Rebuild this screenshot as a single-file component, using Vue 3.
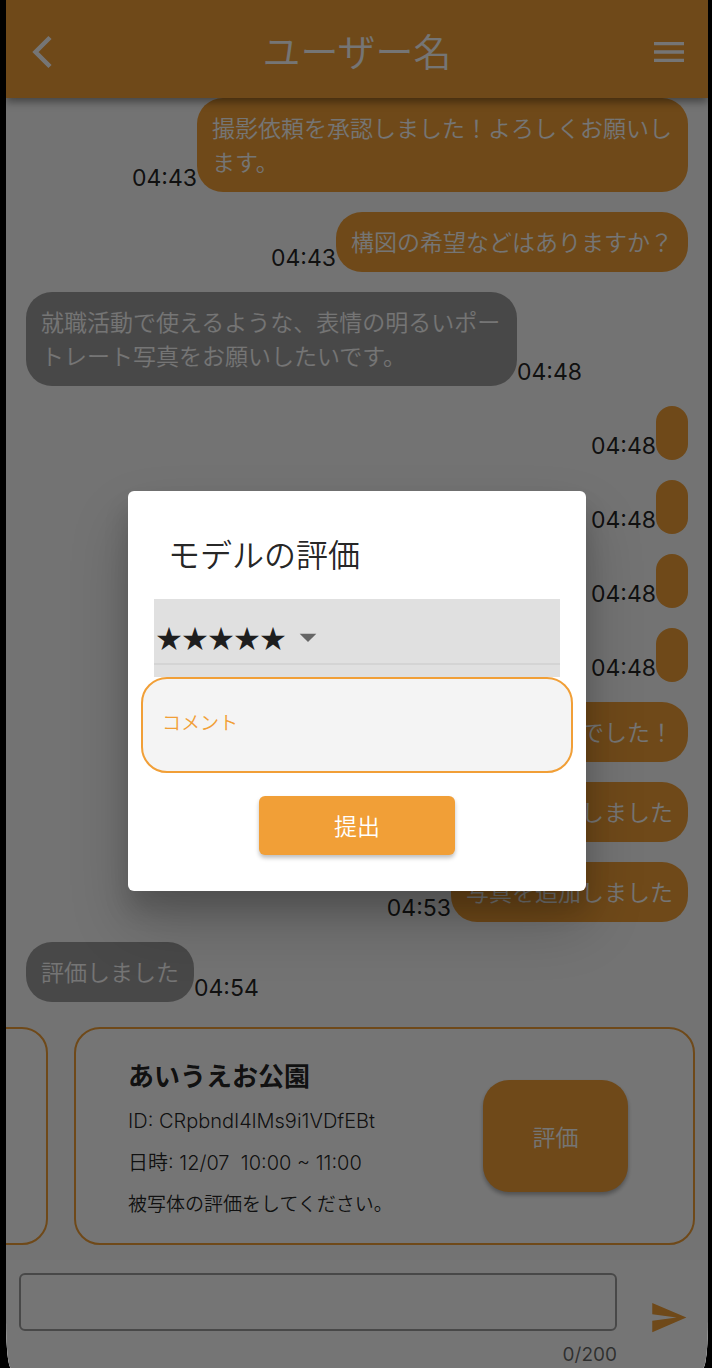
<template>
  <div class="app">
    <header class="header">
      <button class="icon-btn" aria-label="戻る">
        <svg width="40" height="40" viewBox="0 0 40 40">
          <path d="M25 5.5 L10.5 20 L25 34.5" fill="none" stroke="currentColor" stroke-width="4.5" />
        </svg>
      </button>
      <h1>ユーザー名</h1>
      <button class="icon-btn" aria-label="メニュー">
        <svg width="40" height="40" viewBox="0 0 24 24">
          <path d="M3 18h18v-2H3v2zm0-5h18v-2H3v2zm0-7v2h18V6H3z" fill="currentColor" />
        </svg>
      </button>
    </header>

    <main class="messages">
      <div
        v-for="msg in messages"
        :key="msg.id"
        class="message"
        :class="{ mine: msg.mine }"
      >
        <p class="bubble">{{ msg.text }}</p>
        <time>{{ msg.time }}</time>
      </div>
    </main>

    <section class="cards">
      <div class="card" />
      <article class="card">
        <div class="card-info">
          <h2>あいうえお公園</h2>
          <p>ID: CRpbndI4lMs9i1VDfEBt</p>
          <p>日時: 12/07&nbsp; 10:00 ~ 11:00</p>
          <p class="note">被写体の評価をしてください。</p>
        </div>
        <button class="review-btn" @click="open = true">評価</button>
      </article>
    </section>

    <form class="composer" @submit.prevent>
      <div class="field">
        <input v-model="draft" type="text" maxlength="200" aria-label="メッセージ">
        <span class="counter">{{ draft.length }}/200</span>
      </div>
      <button class="send" aria-label="送信">
        <svg width="39" height="39" viewBox="0 0 24 24">
          <path d="M2.01 21L23 12 2.01 3 2 10l15 2-15 2z" fill="currentColor" />
        </svg>
      </button>
    </form>

    <div v-if="open" class="overlay">
      <form class="dialog" role="dialog" aria-labelledby="dialog-title" @submit.prevent="open = false">
        <h2 id="dialog-title">モデルの評価</h2>
        <div class="rating">
          <div class="rating-row">
            <select v-model="rating" aria-label="評価">
              <option v-for="n in 5" :key="n" :value="n">{{ '★'.repeat(n) }}</option>
            </select>
            <svg width="40" height="40" viewBox="0 0 24 24">
              <path d="M7 10l5 5 5-5z" fill="currentColor" />
            </svg>
          </div>
        </div>
        <input v-model="comment" class="comment" type="text" placeholder="コメント" aria-label="コメント">
        <button class="submit">提出</button>
      </form>
    </div>
  </div>
</template>

<script setup>
import { ref } from 'vue';

const open = ref(true);
const rating = ref(5);
const comment = ref('');
const draft = ref('');

const messages = ref([
  { id: 1, mine: true, time: '04:43', text: '撮影依頼を承認しました！よろしくお願いします。' },
  { id: 2, mine: true, time: '04:43', text: '構図の希望などはありますか？' },
  { id: 3, mine: false, time: '04:48', text: '就職活動で使えるような、表情の明るいポートレート写真をお願いしたいです。' },
  { id: 4, mine: true, time: '04:48', text: '' },
  { id: 5, mine: true, time: '04:48', text: '' },
  { id: 6, mine: true, time: '04:48', text: '' },
  { id: 7, mine: true, time: '04:48', text: '' },
  { id: 8, mine: true, time: '04:53', text: 'お疲れ様でした！' },
  { id: 9, mine: true, time: '04:53', text: '写真を追加しました' },
  { id: 10, mine: true, time: '04:53', text: '写真を追加しました' },
  { id: 11, mine: false, time: '04:54', text: '評価しました' },
]);
</script>

<style>
body {
  margin: 0;
  background: #000;
}
</style>

<style scoped>
* {
  box-sizing: border-box;
}

.app {
  position: relative;
  display: flex;
  flex-direction: column;
  min-height: 100vh;
  margin: 0 4px 0 6px;
  overflow: hidden;
  background: #fafafa;
  border-radius: 0 0 5px 5px / 0 0 48px 48px;
  color: rgba(0, 0, 0, 0.87);
  font-family: Inter, "Noto Sans CJK JP", sans-serif;
  font-size: 23px;
}

h1, h2, p {
  margin: 0;
}

button, input, select {
  font-family: inherit;
}

button {
  padding: 0;
  border: none;
  cursor: pointer;
}

/* Header */
.header {
  position: relative;
  display: flex;
  align-items: center;
  justify-content: space-between;
  height: 98px;
  padding: 6px 19px 0;
  background: #f19f37;
  color: #fff;
  box-shadow: 0 4px 8px rgba(0, 0, 0, 0.4);
}

.header h1 {
  font-size: 38px;
  font-weight: 350;
  line-height: 56px;
}

.icon-btn {
  display: flex;
  background: none;
  color: inherit;
}

/* Messages */
.messages {
  display: flex;
  flex: 1;
  flex-direction: column;
  gap: 20px;
  padding: 0 20px;
}

.message {
  display: flex;
  align-items: flex-end;
}

.message.mine {
  flex-direction: row-reverse;
}

.bubble {
  min-width: 32px;
  max-width: 491px;
  min-height: 54px;
  padding: 14px 15px 12px;
  border-radius: 26px;
  background: #9e9e9e;
  color: #fff;
  font-weight: 350;
  line-height: 34px;
}

.mine .bubble {
  background: #f19f37;
}

time {
  line-height: 27px;
}

/* Reservation cards */
.cards {
  display: flex;
  justify-content: flex-end;
  gap: 26px;
  padding: 25px 13px 15px;
}

.card {
  display: flex;
  flex: 0 0 calc(100% - 55px);
  align-items: center;
  justify-content: space-between;
  height: 218px;
  padding: 0 65px 0 52px;
  border: 2px solid #f19f37;
  border-radius: 26px;
  background: #fff;
}

.card-info {
  padding-top: 12px;
  font-size: 20px;
  font-weight: 350;
  line-height: 42px;
}

.card-info h2 {
  margin-bottom: 5px;
  font-size: 26px;
  font-weight: 700;
  line-height: 36px;
}

.card-info .note {
  font-size: 19px;
}

.review-btn {
  width: 145px;
  height: 112px;
  border-radius: 26px;
  background: #f19f37;
  color: #fff;
  font-size: 23px;
  font-weight: 350;
  box-shadow: 0 3px 4px rgba(0, 0, 0, 0.3);
}

/* Message input */
.composer {
  display: flex;
  align-items: center;
  justify-content: space-between;
  padding: 13px 20px 0 13px;
  background: #fff;
}

.field {
  display: flex;
  flex: 1;
  flex-direction: column;
  gap: 11px;
  margin-right: 32px;
}

.field input {
  width: 100%;
  height: 58px;
  padding: 0 16px;
  border: 2px solid #9e9e9e;
  border-radius: 6px;
  background: none;
  font-size: 23px;
}

.counter {
  align-self: flex-end;
  color: rgba(0, 0, 0, 0.6);
  font-size: 19px;
  line-height: 26px;
}

.send {
  display: flex;
  padding-bottom: 6px;
  background: none;
  color: #f19f37;
}

/* Review dialog */
.overlay {
  position: absolute;
  inset: 0;
  display: flex;
  align-items: center;
  padding: 13px 122px 0;
  background: rgba(0, 0, 0, 0.54);
}

.dialog {
  display: flex;
  flex: 1;
  flex-direction: column;
  padding: 41px 13px 36px;
  border-radius: 6px;
  background: #fff;
  box-shadow: 0 18px 25px rgba(0, 0, 0, 0.15), 0 32px 60px rgba(0, 0, 0, 0.2);
}

.dialog h2 {
  margin-bottom: 19px;
  padding-left: 27px;
  font-size: 32px;
  font-weight: 350;
  line-height: 48px;
}

.rating {
  height: 78px;
  margin: 0 13px;
  background: #e0e0e0;
}

.rating-row {
  display: flex;
  align-items: center;
  height: 66px;
  padding-top: 12px;
  border-bottom: 2px solid #d4d4d4;
}

.rating select {
  appearance: none;
  width: 134px;
  padding: 0 0 0 2px;
  border: none;
  background: none;
  color: #1e1e1e;
  font-family: "Noto Sans CJK JP", sans-serif;
  font-size: 26px;
}

.rating svg {
  color: #666;
  pointer-events: none;
}

.comment {
  height: 96px;
  padding: 0 19px 2px;
  border: 2px solid #f19f37;
  border-radius: 26px;
  background: #f4f4f4;
  font-size: 19px;
}

.comment::placeholder {
  color: #f19f37;
  font-weight: 350;
  opacity: 1;
}

.submit {
  align-self: center;
  width: 196px;
  height: 59px;
  margin-top: 23px;
  border-radius: 6px;
  background: #f19f37;
  color: #fff;
  font-size: 23px;
  font-weight: 350;
  box-shadow: 0 3px 4px rgba(0, 0, 0, 0.25);
}
</style>
